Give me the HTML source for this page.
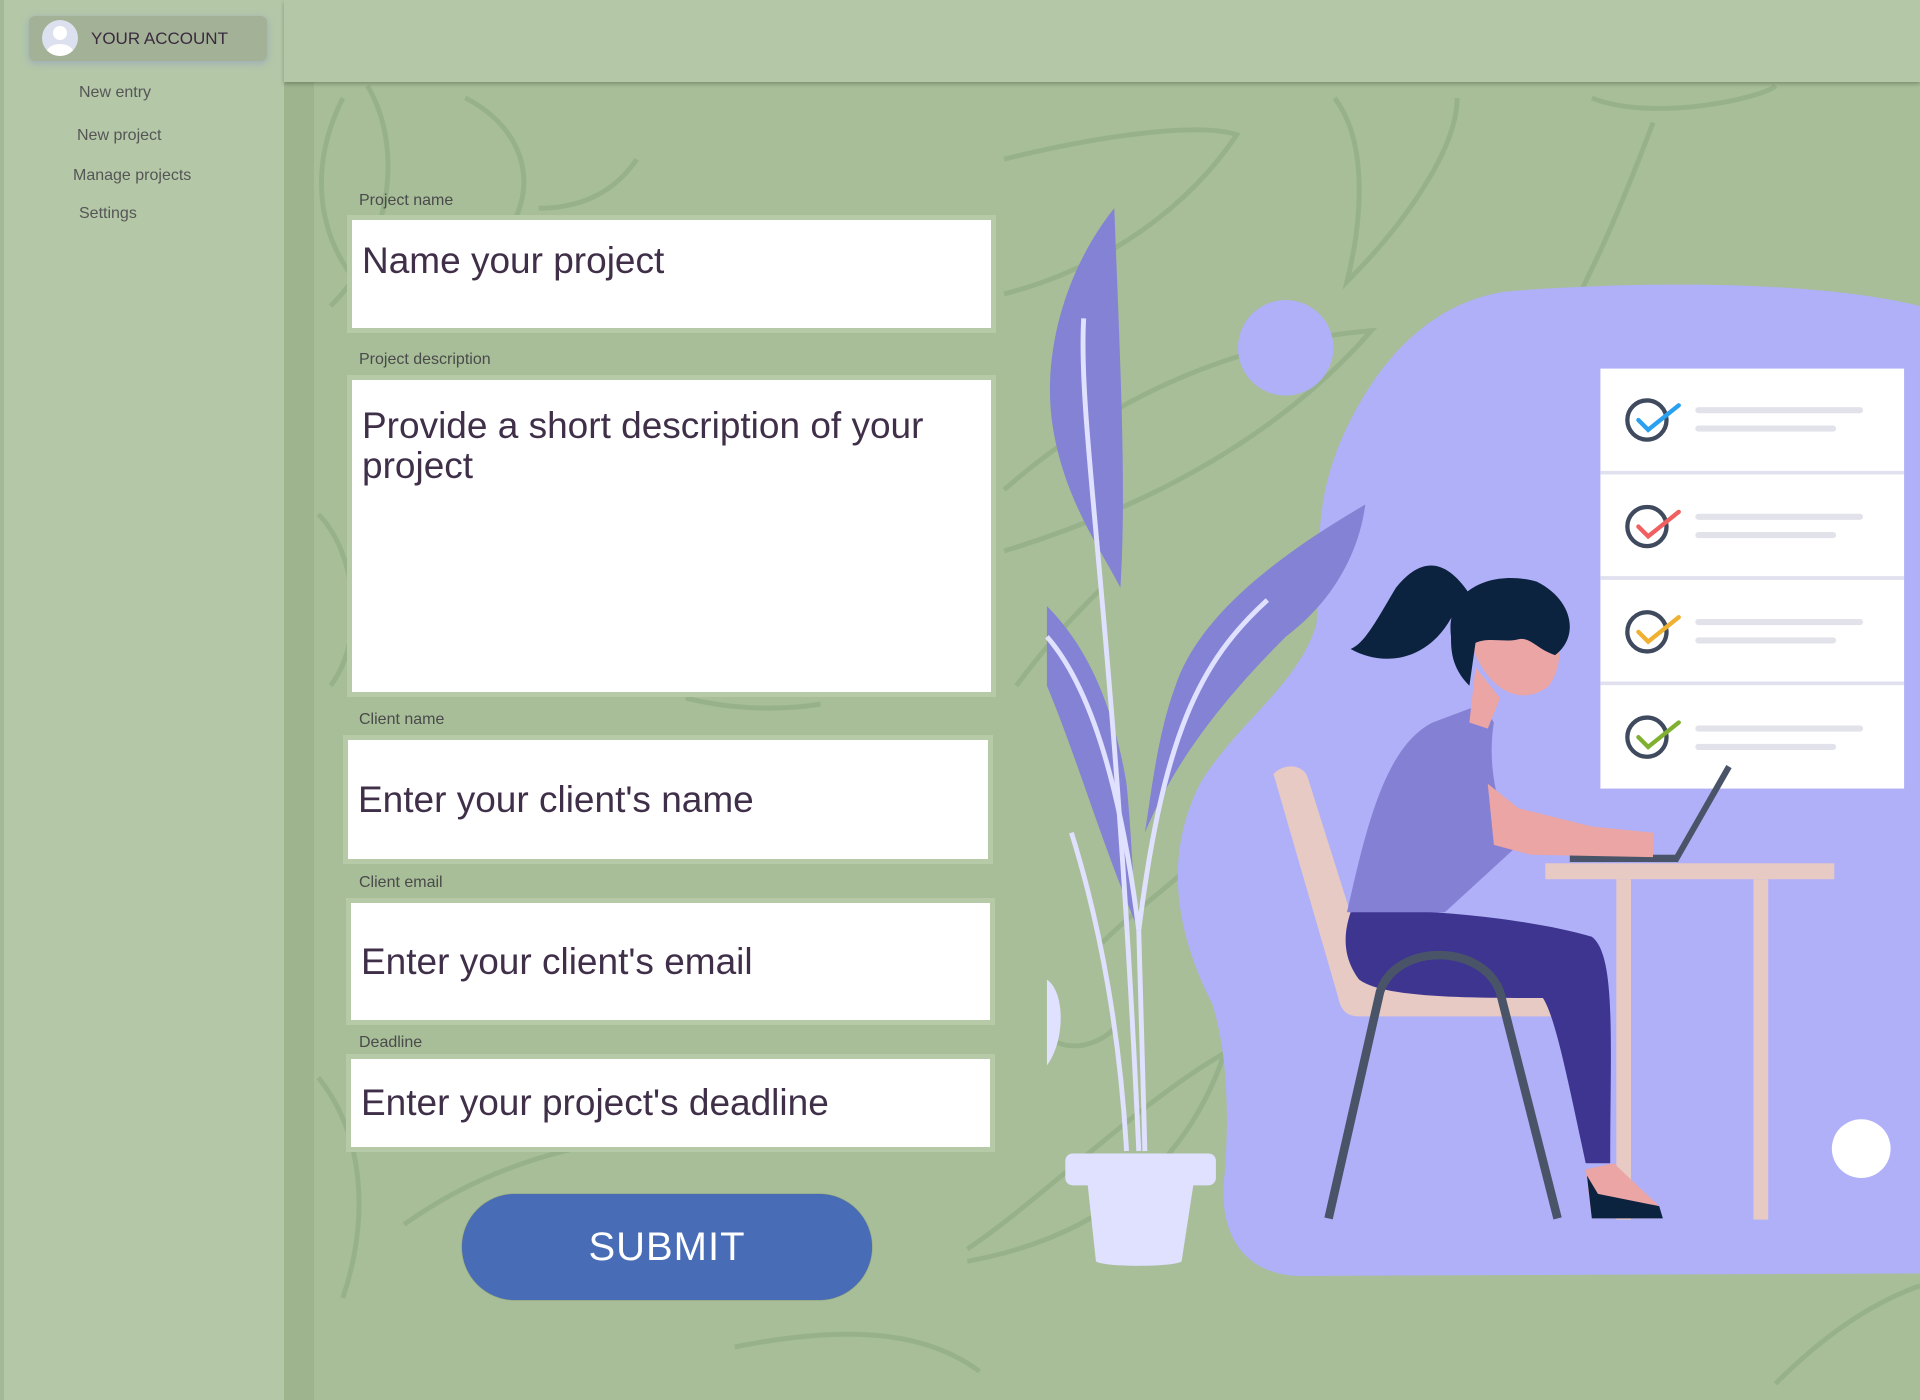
<!DOCTYPE html>
<html><head><meta charset="utf-8"><style>
*{margin:0;padding:0;box-sizing:border-box}
body{width:1920px;height:1400px;overflow:hidden;background:#a7be98;font-family:"Liberation Sans",sans-serif;position:relative;color:#3d2b45}
.side{position:absolute;left:0;top:0;width:284px;height:1400px;background:#b4c8a8;border-left:4px solid #a3b896}
.top{position:absolute;left:284px;top:0;right:0;height:82px;background:#b4c8a8;box-shadow:0 2px 4px rgba(0,0,0,.25);z-index:3}
.stripe{position:absolute;left:284px;top:82px;width:30px;height:1318px;background:#9db48e}
.acct{position:absolute;left:25px;top:16px;width:238px;height:45px;background:#a3b296;border-radius:6px;box-shadow:0 2px 8px rgba(140,150,200,.6);font-size:17px;color:#3a2a40}
.acct .av{position:absolute;left:13px;top:4px;width:36px;height:36px;border-radius:50%;background:#dde0ee;overflow:hidden}
.nav{position:absolute;font-size:16px;color:#555}
.lbl{position:absolute;left:359px;font-size:16px;color:#4a4a4a}
.box{position:absolute;background:#fff;border:5px solid #b6caa8;font-size:37px;color:#3f2f48;padding-left:10px}
.btn{position:absolute;left:462px;top:1194px;width:410px;height:106px;border-radius:53px;background:#486db6;color:#fff;font-size:40px;text-align:center;line-height:106px;box-shadow:0 0 1px #555;letter-spacing:1px}
</style></head><body>
<svg style="position:absolute;left:0;top:0" width="1920" height="1400" viewBox="0 0 1568 1143.3">
<g fill="none" stroke="#94af87" stroke-width="4" opacity=".8">
<path d="M300 70 C330 120 320 200 270 250 M280 80 C250 140 260 200 300 240"/>
<path d="M380 80 C420 100 440 140 420 180 M520 130 C500 160 470 170 440 170"/>
<path d="M1090 80 C1120 120 1110 190 1100 230 C1150 180 1190 120 1190 80"/>
<path d="M1300 80 C1350 100 1440 80 1450 70 M1350 100 C1320 180 1300 220 1290 240"/>
<path d="M820 130 C900 110 980 100 1010 110 C970 170 900 220 820 240"/>
<path d="M820 400 C900 330 1000 280 1120 270 C1050 350 950 410 820 450"/>
<path d="M830 560 C860 520 880 500 900 480"/>
<path d="M900 770 C950 720 1000 700 1000 650"/>
<path d="M790 1020 C850 980 930 900 1000 860 C970 950 900 1010 790 1030"/>
<path d="M260 420 C290 450 300 520 270 560"/><path d="M260 880 C300 930 300 1000 280 1060"/>
<path d="M330 1000 C400 950 480 930 540 930"/><path d="M600 1100 C700 1080 760 1090 800 1120"/>
<path d="M1450 1130 C1500 1080 1540 1060 1568 1050"/><path d="M560 570 C600 580 640 580 670 575"/>
<path d="M860 850 C880 860 900 850 910 840"/>
</g>
<path d="M1230 238 C1330 230 1480 228 1568 250 L1568 1040 L1060 1042 C1010 1040 995 1000 1000 960 C1005 900 1000 850 990 820 C960 760 950 700 980 640 C1010 590 1060 560 1075 510 C1080 460 1070 420 1095 360 C1130 280 1180 245 1230 238Z" fill="#b0b0f8"/>
<circle cx="1050" cy="284" r="39" fill="#b0b0f8"/>
<circle cx="1520" cy="938" r="24" fill="#fff"/>
<rect x="1300" y="294" width="262" height="357" fill="#b0b0f8"/>
<rect x="1307" y="301" width="248" height="343" fill="#fff"/>
<g stroke="#e0e0ee" stroke-width="3"><line x1="1307" y1="386" x2="1555" y2="386"/><line x1="1307" y1="472" x2="1555" y2="472"/><line x1="1307" y1="558" x2="1555" y2="558"/></g>
<g stroke-linecap="round" fill="none">
<g stroke="#e2e2ea" stroke-width="5"><path d="M1387 335H1519M1387 350H1497M1387 422H1519M1387 437H1497M1387 508H1519M1387 523H1497M1387 595H1519M1387 610H1497"/></g>
<g stroke="#3f4a5e" stroke-width="3.5"><circle cx="1345" cy="343" r="16"/><circle cx="1345" cy="430" r="16"/><circle cx="1345" cy="516" r="16"/><circle cx="1345" cy="602" r="16"/></g>
<path d="M1338 343l8 8 25-20" stroke="#2aa0f0" stroke-width="3.5"/>
<path d="M1338 430l8 8 25-20" stroke="#f06060" stroke-width="3.5"/>
<path d="M1338 516l8 8 25-20" stroke="#f0b030" stroke-width="3.5"/>
<path d="M1338 602l8 8 25-20" stroke="#80b030" stroke-width="3.5"/>
</g>
<rect x="1262" y="705" width="236" height="13" fill="#e8cac4"/>
<rect x="1320" y="718" width="12" height="278" fill="#e8cac4"/><rect x="1432" y="718" width="12" height="278" fill="#e8cac4"/>
<path d="M1412 626 L1368 703" stroke="#4a5468" stroke-width="5"/><rect x="1282" y="698" width="88" height="6" fill="#4a5468"/>
<path d="M1040 632 C1050 622 1065 625 1068 635 L1120 800 L1270 810 L1270 830 L1110 830 C1100 830 1095 825 1093 815 Z" fill="#e8cac4"/>
<path d="M1103 745 C1150 740 1250 750 1300 765 C1320 780 1315 850 1315 950 L1295 950 C1280 880 1270 830 1260 815 C1200 815 1130 815 1110 800 C1095 780 1098 760 1103 745Z" fill="#3e3590"/>
<path d="M1295 955 L1318 950 L1355 985 L1355 995 L1300 995 Z" fill="#eba5a5"/><path d="M1296 960 L1300 995 L1358 995 L1355 985 L1305 975 Z" fill="#0c2340"/>
<path d="M1085 995 L1127 810 C1140 770 1210 770 1225 810 L1272 995" fill="none" stroke="#4a5468" stroke-width="7"/>
<path d="M1100 745 C1115 680 1130 610 1170 590 L1210 575 L1220 590 C1215 620 1220 660 1240 690 L1180 745 Z" fill="#8480d4"/>
<path d="M1215 640 L1240 660 L1300 675 L1350 680 L1350 700 L1250 698 L1220 690 Z" fill="#eba5a5"/>
<path d="M1205 545 L1200 590 L1215 595 L1225 570 Z" fill="#eba5a5"/>
<path d="M1200 520 C1210 560 1240 580 1265 560 C1275 545 1275 530 1270 520 Z" fill="#eba5a5"/>
<path d="M1185 520 C1180 480 1220 465 1255 475 C1285 490 1290 520 1270 535 C1255 530 1250 520 1240 522 C1230 525 1215 520 1205 525 L1200 560 C1185 545 1185 530 1185 520Z" fill="#0c2340"/>
<path d="M1200 485 C1180 455 1160 455 1140 480 C1125 505 1115 525 1103 530 C1130 545 1165 540 1185 505 Z" fill="#0c2340"/>
<path d="M910 170 C870 220 850 290 860 350 C870 410 900 450 915 480 C920 400 915 300 910 170Z" fill="#8482d4"/>
<path d="M1115 412 C1050 450 980 500 960 560 C945 600 940 650 935 680 C960 620 1000 570 1050 520 C1090 490 1110 450 1115 412Z" fill="#8482d4"/>
<path d="M855 495 C890 530 910 580 920 640 C925 690 925 730 930 760 C900 690 880 620 855 560Z" fill="#8482d4"/>
<g stroke="#e0e0ff" stroke-width="4" fill="none"><path d="M885 260 C880 350 910 500 930 940"/><path d="M1035 490 C980 540 950 600 930 760"/><path d="M855 520 C890 560 915 640 930 760"/><path d="M875 680 C900 760 915 850 920 940"/><path d="M930 760 L935 940"/></g>
<path d="M855 800 C870 810 870 850 855 870Z" fill="#e0e0ff"/>
<rect x="870" y="942" width="123" height="26" rx="6" fill="#e0e0ff"/>
<path d="M888 965 L975 965 L965 1030 C960 1035 900 1035 895 1030Z" fill="#e0e0ff"/>
</svg>
<div class="stripe"></div>
<div class="side">
<div class="acct"><div class="av"><div style="position:absolute;left:11px;top:6px;width:14px;height:14px;border-radius:50%;background:#fff"></div><div style="position:absolute;left:4px;top:24px;width:28px;height:20px;border-radius:50% 50% 0 0;background:#fff"></div></div><span style="position:absolute;left:62px;top:13px">YOUR ACCOUNT</span></div>
<div class="nav" style="left:75px;top:84px">New entry</div>
<div class="nav" style="left:73px;top:127px">New project</div>
<div class="nav" style="left:69px;top:167px">Manage projects</div>
<div class="nav" style="left:75px;top:205px">Settings</div>
</div>
<div class="top"></div>
<div class="lbl" style="top:192px">Project name</div>
<div class="box" style="left:347px;top:215px;width:649px;height:118px;padding-top:20px">Name your project</div>
<div class="lbl" style="top:351px">Project description</div>
<div class="box" style="left:347px;top:375px;width:649px;height:322px;padding-top:26px;line-height:40px">Provide a short description of your project</div>
<div class="lbl" style="top:711px">Client name</div>
<div class="box" style="left:343px;top:735px;width:650px;height:129px;line-height:119px">Enter your client's name</div>
<div class="lbl" style="top:874px">Client email</div>
<div class="box" style="left:346px;top:898px;width:649px;height:127px;line-height:117px">Enter your client's email</div>
<div class="lbl" style="top:1034px">Deadline</div>
<div class="box" style="left:346px;top:1054px;width:649px;height:98px;line-height:88px">Enter your project's deadline</div>
<div class="btn">SUBMIT</div>
</body></html>
